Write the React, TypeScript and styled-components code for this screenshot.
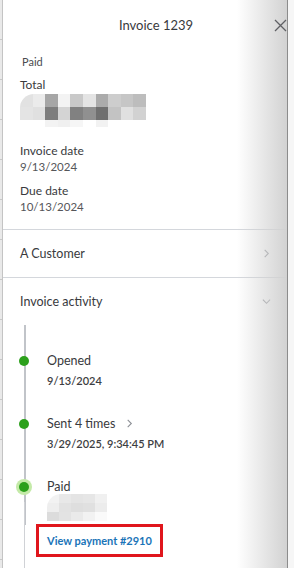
import styled, { createGlobalStyle } from "styled-components";

const GlobalStyle = createGlobalStyle`
  html, body {
    margin: 0;
    padding: 0;
    background: #fff;
  }
  body {
    font-family: Lato, "Noto Sans", sans-serif;
    color: #393a3d;
  }
`

const Page = styled.div`
  width: 294px;
  height: 568px;
  overflow: hidden;
  display: flex;
  flex-direction: row;
`

const BackStrip = styled.div`
  width: 2px;
  flex-shrink: 0;
  border-right: 1px solid #c4c4c4;
  background: repeating-linear-gradient(to bottom, #e9e9e9 0, #e9e9e9 39px, #c8c8c8 39px, #c8c8c8 40px);
`

const Panel = styled.div`
  position: relative;
  flex: 1;
  display: flex;
  flex-direction: column;
  background: #fff;

  &::after {
    content: "";
    position: absolute;
    top: 0;
    right: 0;
    bottom: 0;
    width: 50px;
    background: linear-gradient(to right, #fff0, #d2d2d2);
    pointer-events: none;
  }
`

const RightEdge = styled.div`
  width: 6px;
  flex-shrink: 0;
  border-left: 1px solid #8c8c8c;
  background: #f6f6f6;
`

const Header = styled.div`
  height: 50px;
  display: flex;
  align-items: center;
  justify-content: center;
  position: relative;
  padding-left: 22px;
  font-size: 13px;
  color: #393a3d;
`

const Close = styled.div`
  position: absolute;
  z-index: 1;
  right: 0;
  top: 19px;
  width: 13px;
  height: 13px;
  color: #5f6064;
`

const Summary = styled.div`
  padding: 5px 17px 0;
  display: flex;
  flex-direction: column;
`

const Status = styled.div`
  font-size: 11px;
  margin-left: 2px;
  color: #4a4b4f;
`

const Label = styled.div<{ top: number }>`
  font-size: 12px;
  margin-top: ${p => p.top}px;
  color: #393a3d;
`

const Value = styled.div`
  font-size: 11.5px;
  margin-top: 2px;
  color: #55565a;
`

const Mosaic = styled.div<{ cols: number, size: number, rows: string }>`
  display: grid;
  grid-template-columns: repeat(${p => p.cols}, ${p => p.size}px);
  grid-template-rows: ${p => p.rows};
  border-top-left-radius: 14px;
  overflow: hidden;
  width: max-content;
`

const Cell = styled.div<{ shade: string }>`
  background: ${p => p.shade};
`

const Divider = styled.div`
  height: 1px;
  background: #d4d7dc;
`

const SectionRow = styled.div`
  height: 47px;
  padding: 0 16px 0 17px;
  display: flex;
  align-items: center;
  justify-content: space-between;
  font-size: 12.5px;
  color: #393a3d;
`

const Chevron = styled.svg`
  width: 9px;
  height: 9px;
  color: #8d9096;
`

const Timeline = styled.div`
  position: relative;
  margin-left: 21px;
  padding: 28px 0 0 23px;
  display: flex;
  flex-direction: column;
  gap: 29px;

  &::before {
    content: "";
    position: absolute;
    left: 0;
    top: 0;
    height: 200px;
    width: 2px;
    background: #c1c4c9;
  }
`

const Event = styled.div`
  position: relative;
  display: flex;
  flex-direction: column;
`

const Dot = styled.div<{ current?: boolean }>`
  position: absolute;
  left: -28px;
  top: 3px;
  width: 10px;
  height: 10px;
  border-radius: 50%;
  background: #2ca01c;
  box-shadow: ${p => p.current ? "0 0 0 3px #c4eaa8" : "none"};
`

const EventTitle = styled.div`
  font-size: 12.5px;
  color: #393a3d;
  display: flex;
  align-items: center;
  gap: 10px;
`

const EventDate = styled.div`
  font-size: 11px;
  font-weight: 600;
  margin-top: 6px;
  color: #3d3e42;
`

const PaidBody = styled.div`
  position: relative;

  &::before {
    content: "";
    position: absolute;
    left: -23px;
    top: 8px;
    height: 80px;
    width: 1px;
    background: #d0d2d6;
  }
`

const PaymentLink = styled.a`
  display: inline-block;
  margin: 3px 0 0 -11px;
  padding: 7px 8px 7px 8px;
  border: 3px solid #e0161c;
  font-size: 11px;
  font-weight: 700;
  color: #1a74b8;
  text-decoration: none;
`

const totalShades = [
  ["#e2e2e2", "#ebebeb", "#a6a6a6", "#f3f3f3", "#c9c9c9", "#e4e4e4", "#ababab", "#cdcdcd", "#c6c6c6", "#bdbdbd"],
  ["#e4e4e4", "#e0e0e0", "#7d7d7d", "#d4d4d4", "#818181", "#909090", "#707070", "#c3c3c3", "#e0e0e0", "#d2d2d2"],
  ["#fff", "#fff", "#f3f3f3", "#f0f0f0", "#f6f6f6", "#fff", "#f2f2f2", "#fff", "#fff", "#fff"],
]

const paidShades = [
  ["#f2f2f2", "#e8e8e8", "#e4e4e4", "#e6e6e6", "#f0f0f0"],
  ["#eeeeee", "#e2e2e2", "#dedede", "#e0e0e0", "#ececec"],
  ["#dcdcdc", "#e3e3e3", "#eaeaea", "#f2f2f2", "#fafafa"],
]

function Blur(props: { shades: string[][], size: number, rows: string }) {
  return <Mosaic cols={props.shades[0].length} size={props.size} rows={props.rows}>
    {props.shades.flatMap((row, r) => row.map((shade, c) => <Cell key={`${r}-${c}`} shade={shade} />))}
  </Mosaic>
}

function ChevronRight() {
  return <Chevron viewBox="0 0 10 10"><path d="M3 1l4 4-4 4" fill="none" stroke="currentColor" strokeWidth="1.2" /></Chevron>
}

function ChevronDown() {
  return <Chevron viewBox="0 0 10 10"><path d="M1 3l4 4 4-4" fill="none" stroke="currentColor" strokeWidth="1.2" /></Chevron>
}

export default function App() {
  return <>
    <GlobalStyle />
    <Page>
      <BackStrip />
      <Panel>
        <Header>
          Invoice 1239
          <Close>
            <svg viewBox="0 0 13 13" width="13" height="13">
              <path d="M1 1l11 11M12 1L1 12" stroke="currentColor" strokeWidth="1.3" />
            </svg>
          </Close>
        </Header>
        <Summary>
          <Status>Paid</Status>
          <Label top={9}>Total</Label>
          <div style={{ marginTop: 2 }}><Blur shades={totalShades} size={12.6} rows="13px 13px 7px" /></div>
          <Label top={16}>Invoice date</Label>
          <Value>9/13/2024</Value>
          <Label top={10}>Due date</Label>
          <Value>10/13/2024</Value>
        </Summary>
        <div style={{ height: 16 }} />
        <Divider />
        <SectionRow>A Customer <ChevronRight /></SectionRow>
        <Divider />
        <SectionRow>Invoice activity <ChevronDown /></SectionRow>
        <Timeline>
          <Event>
            <Dot />
            <EventTitle>Opened</EventTitle>
            <EventDate>9/13/2024</EventDate>
          </Event>
          <Event>
            <Dot />
            <EventTitle>Sent 4 times <ChevronRight /></EventTitle>
            <EventDate>3/29/2025, 9:34:45 PM</EventDate>
          </Event>
          <Event>
            <Dot current />
            <EventTitle>Paid</EventTitle>
            <PaidBody>
              <Blur shades={paidShades} size={12} rows="9px 9px 9px" />
              <PaymentLink href="#">View payment #2910</PaymentLink>
            </PaidBody>
          </Event>
        </Timeline>
      </Panel>
      <RightEdge />
    </Page>
  </>
}
